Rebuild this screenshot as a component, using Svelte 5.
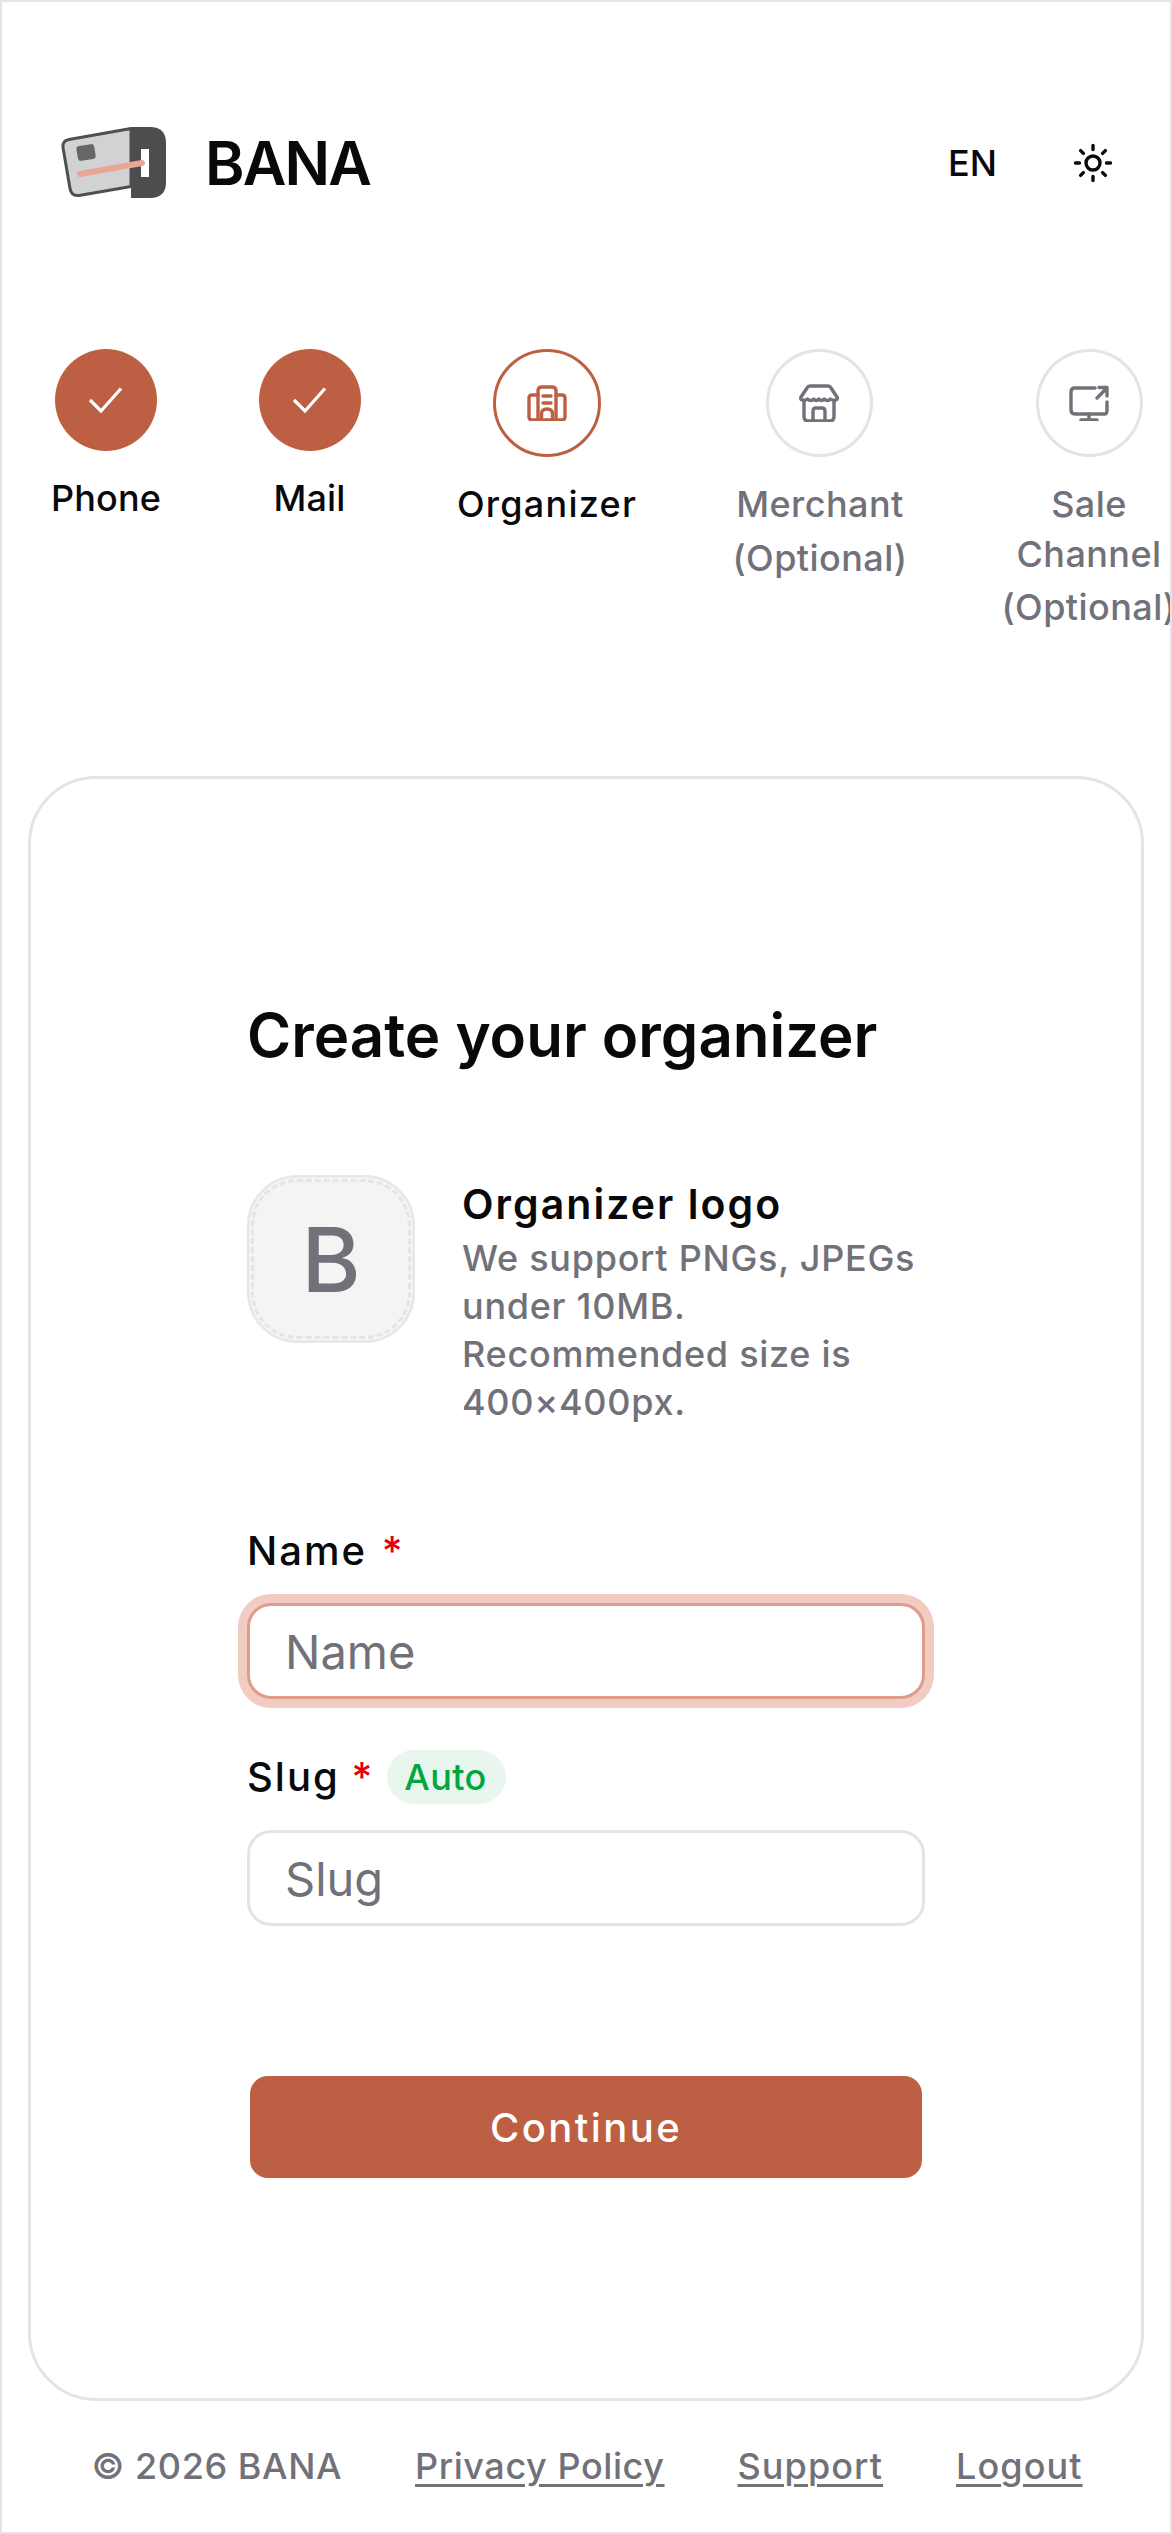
<script>
  const steps = [
    { lines: ['Phone'], state: 'done', width: 208 },
    { lines: ['Mail'], state: 'done', width: 199 },
    { lines: ['Organizer'], state: 'active', icon: 'building', width: 276 },
    { lines: ['Merchant', '(Optional)'], state: 'todo two', icon: 'store', width: 268 },
    { lines: ['Sale', 'Channel', '(Optional)'], state: 'todo three', icon: 'monitor', width: 272 }
  ];
</script>

<div class="frame">
  <header class="top">
    <div class="brand">
      <svg class="logo" viewBox="60 127 107 72" width="107" height="72" aria-hidden="true">
        <path d="M131 128.5 69 139.5q-7 1.500-6 8l7 41q1.500 8 9 7l52-9z" fill="#d2d2d2" stroke="#4f4f4f" stroke-width="3" stroke-linejoin="round"/>
        <rect x="77" y="145" width="18" height="15" rx="3" fill="#666" transform="rotate(-9 86 152)"/>
        <path d="M131 127h19q16 0 16 16v39q0 16-16 16h-19z" fill="#4d4d4d"/>
        <rect x="141" y="149" width="8" height="28" fill="#fff"/>
        <path d="M80 174 142 163" stroke="#e8a795" stroke-width="6" stroke-linecap="round" fill="none"/>
      </svg>
      <span class="wordmark">BANA</span>
    </div>
    <div class="tools">
      <span class="lang">EN</span>
      <svg class="sun" viewBox="0 0 40 40" width="40" height="40" fill="none" stroke="#09090b" stroke-width="3.400" stroke-linecap="round" aria-hidden="true">
        <circle cx="20" cy="20" r="7"/>
        <path d="M20 2.500v4M20 33.500v4M2.500 20h4M33.500 20h4M7.600 7.600l2.800 2.800M29.600 29.600l2.800 2.800M7.600 32.400l2.800-2.800M29.600 10.400l2.800-2.800"/>
      </svg>
    </div>
  </header>

  <nav class="steps">
    {#each steps as step}
      <div class="step {step.state}" style="width: {step.width}px">
        <div class="dot">
          {#if step.state === 'done'}
            <svg viewBox="0 0 36 26" width="36" height="26" fill="none" stroke="#fff" stroke-width="3.200" aria-hidden="true"><path d="M2 13 13 24 33 1.500"/></svg>
          {:else if step.icon === 'building'}
            <svg viewBox="0 0 40 36" width="40" height="36" fill="none" stroke="currentColor" stroke-width="3.400" stroke-linejoin="round" stroke-linecap="round" aria-hidden="true">
              <path d="M11 35V6q0-4 4-4h10q4 0 4 4v29"/>
              <path d="M11 10H5q-3 0-3 3v19q0 3 3 3h30q3 0 3-3V13q0-3-3-3h-6"/>
              <path d="M16 11h8M16 18h8M14.500 34v-5q0-5 5.500-5t5.500 5v5"/>
            </svg>
          {:else if step.icon === 'store'}
            <svg viewBox="0 0 40 38" width="40" height="38" fill="none" stroke="currentColor" stroke-width="3.400" stroke-linejoin="round" stroke-linecap="round" aria-hidden="true">
              <path d="M11 2h18q2 0 3 2l6 9q1 2-1 3-3 1-5.500-1-3 3-6.250 0-3 3-5.250 0-3 3-5.250 0-3 3-6.250 0-2.500 2-5.500 1-2-1-1-3l6-9q1-2 3-2z"/>
              <path d="M5 17v15q0 5 4 5h22q4 0 4-5V17"/>
              <path d="M14 36V27q0-3 3-3h6q3 0 3 3v9"/>
            </svg>
          {:else}
            <svg viewBox="0 0 40 36" width="40" height="36" fill="none" stroke="currentColor" stroke-width="3.400" stroke-linejoin="round" stroke-linecap="round" aria-hidden="true">
              <path d="M26 3H6Q2 3 2 7v18q0 4 4 4h30q2 0 2-4v-8"/>
              <path d="M28 13 38 3M30 2.500h8v8.500"/>
              <path d="M20 29v6M12 35h16"/>
            </svg>
          {/if}
        </div>
        <div class="label">
          {#each step.lines as line}<span>{line}</span>{/each}
        </div>
      </div>
    {/each}
  </nav>

  <main class="card">
    <div class="form">
      <h1>Create your organizer</h1>

      <div class="logo-row">
        <div class="logo-box"><span>B</span></div>
        <div class="logo-text">
          <div class="logo-title">Organizer logo</div>
          <p>We support PNGs, JPEGs under 10MB. Recommended size is 400×400px.</p>
        </div>
      </div>

      <label class="name-label" for="name">Name <span class="req">*</span></label>
      <input id="name" class="field focus" placeholder="Name" />

      <div class="slug-label">
        <label for="slug">Slug <span class="req">*</span></label>
        <span class="badge">Auto</span>
      </div>
      <input id="slug" class="field" placeholder="Slug" />

      <button class="submit">Continue</button>
    </div>
  </main>

  <footer class="foot">
    <span class="tight">© 2026 BANA</span>
    <a class="tight" href="#privacy">Privacy Policy</a>
    <a href="#support">Support</a>
    <a href="#logout">Logout</a>
  </footer>
</div>

<style>
  :global(body) { margin: 0; background: #fff; }
  .frame {
    box-sizing: border-box;
    width: 1172px;
    height: 2534px;
    border: 2px solid #e4e4e7;
    overflow: hidden;
    font-family: Inter, "Noto Sans", sans-serif;
    color: #09090b;
    background: #fff;
  }
  .top {
    display: flex;
    justify-content: space-between;
    align-items: center;
    padding: 125px 57px 0 58px;
  }
  .brand { display: flex; align-items: center; gap: 38px; height: 72px; }
  .logo { display: block; }
  .wordmark { font-size: 60px; font-weight: 600; letter-spacing: -0.03em; line-height: 72px; }
  .tools { display: flex; align-items: center; gap: 76px; }
  .lang { font-size: 36px; font-weight: 500; line-height: 44px; }
  .sun { display: block; }

  .steps { display: flex; margin-top: 150px; height: 426.500px; align-items: flex-start; }
  .step { flex: none; display: flex; flex-direction: column; align-items: center; }
  .dot {
    box-sizing: border-box;
    flex: none;
    display: flex;
    align-items: center;
    justify-content: center;
    width: 107px;
    height: 108px;
    border-radius: 50%;
    border: 3px solid #e4e4e7;
    color: #71717a;
  }
  .done .dot { width: 102px; height: 102px; background: #bd5f42; border: 0; }
  .active .dot { width: 108px; border: 3.500px solid #bd5f42; color: #bd5f42; }
  .label {
    margin-top: 22px;
    font-size: 36px;
    line-height: 50px;
    font-weight: 500;
    letter-spacing: 0.012em;
    text-align: center;
    color: #71717a;
    white-space: nowrap;
  }
  .label span { display: block; }
  .done .label { color: #09090b; letter-spacing: 0.005em; }
  .active .label { color: #09090b; letter-spacing: 0.035em; }
  .two .label { margin-top: 20px; line-height: 54px; padding-left: 2px; }
  .three .label span:last-child { margin-top: 3px; }

  .card {
    box-sizing: border-box;
    margin: 0 26px;
    height: 1625px;
    border: 3px solid #e4e4e7;
    border-radius: 68px;
    padding: 220.500px 216px 0;
  }
  .form { display: flex; flex-direction: column; }
  h1 { margin: 0; font-size: 60px; line-height: 72px; font-weight: 600; }
  .logo-row { display: flex; gap: 47px; margin-top: 104px; }
  .logo-box {
    box-sizing: border-box;
    flex: none;
    width: 168px;
    height: 168px;
    display: flex;
    align-items: center;
    justify-content: center;
    border: 3px solid #e8e8ea;
    outline: 3px dashed #e4e4e7;
    outline-offset: -7px;
    box-shadow: inset 0 0 0 1px #fafafa;
    border-radius: 50px;
    background: #f4f4f5;
    color: #71717a;
    font-size: 90px;
    font-weight: 500;
  }
  .logo-text { width: 465px; }
  .logo-title { font-size: 41px; line-height: 58px; margin-bottom: 1px; font-weight: 600; letter-spacing: 0.05em; }
  .logo-text p {
    margin: 0;
    font-size: 36px;
    line-height: 48px;
    font-weight: 500;
    letter-spacing: 0.02em;
    color: #71717a;
  }
  .name-label, .slug-label label { font-size: 40px; line-height: 52px; font-weight: 500; letter-spacing: 0.05em; }
  .name-label { margin-top: 99px; }
  .req { color: #e7000b; margin-left: 2px; }
  .slug-label .req { margin-left: -1px; }
  .field {
    box-sizing: border-box;
    margin-top: 26px;
    width: 678px;
    height: 96px;
    padding: 0 35px;
    border: 3px solid #e4e4e7;
    border-radius: 24px;
    font-family: inherit;
    font-size: 47px;
    font-weight: 400;
    outline: none;
    background: #fff;
  }
  .field::placeholder { color: #71717a; opacity: 1; }
  .focus { border-color: #de9d8a; box-shadow: 0 0 0 9px #f2ccc2; }
  .slug-label { display: flex; align-items: center; gap: 13px; margin-top: 51px; height: 54px; }
  .badge {
    display: flex;
    align-items: center;
    height: 54px;
    padding: 0 19px 0 17px;
    border-radius: 27px;
    background: #e8f6ee;
    color: #00a63e;
    font-size: 36px;
    font-weight: 500;
    letter-spacing: 0.01em;
  }
  .submit {
    margin: 150px 3px 0 3px;
    height: 102px;
    border: 0;
    border-radius: 18px;
    background: #bd5f42;
    color: #fff;
    font-family: inherit;
    font-size: 40px;
    font-weight: 500;
    letter-spacing: 0.06em;
  }
  .foot {
    display: flex;
    justify-content: center;
    gap: 73px;
    margin-top: 43px;
    padding-left: 2px;
    font-size: 36px;
    line-height: 44px;
    font-weight: 500;
    letter-spacing: 0.03em;
    color: #71717a;
  }
  .foot .tight { letter-spacing: 0.016em; }
  .foot a { color: inherit; text-decoration: underline; text-decoration-thickness: 3px; text-underline-offset: 5px; }
</style>
